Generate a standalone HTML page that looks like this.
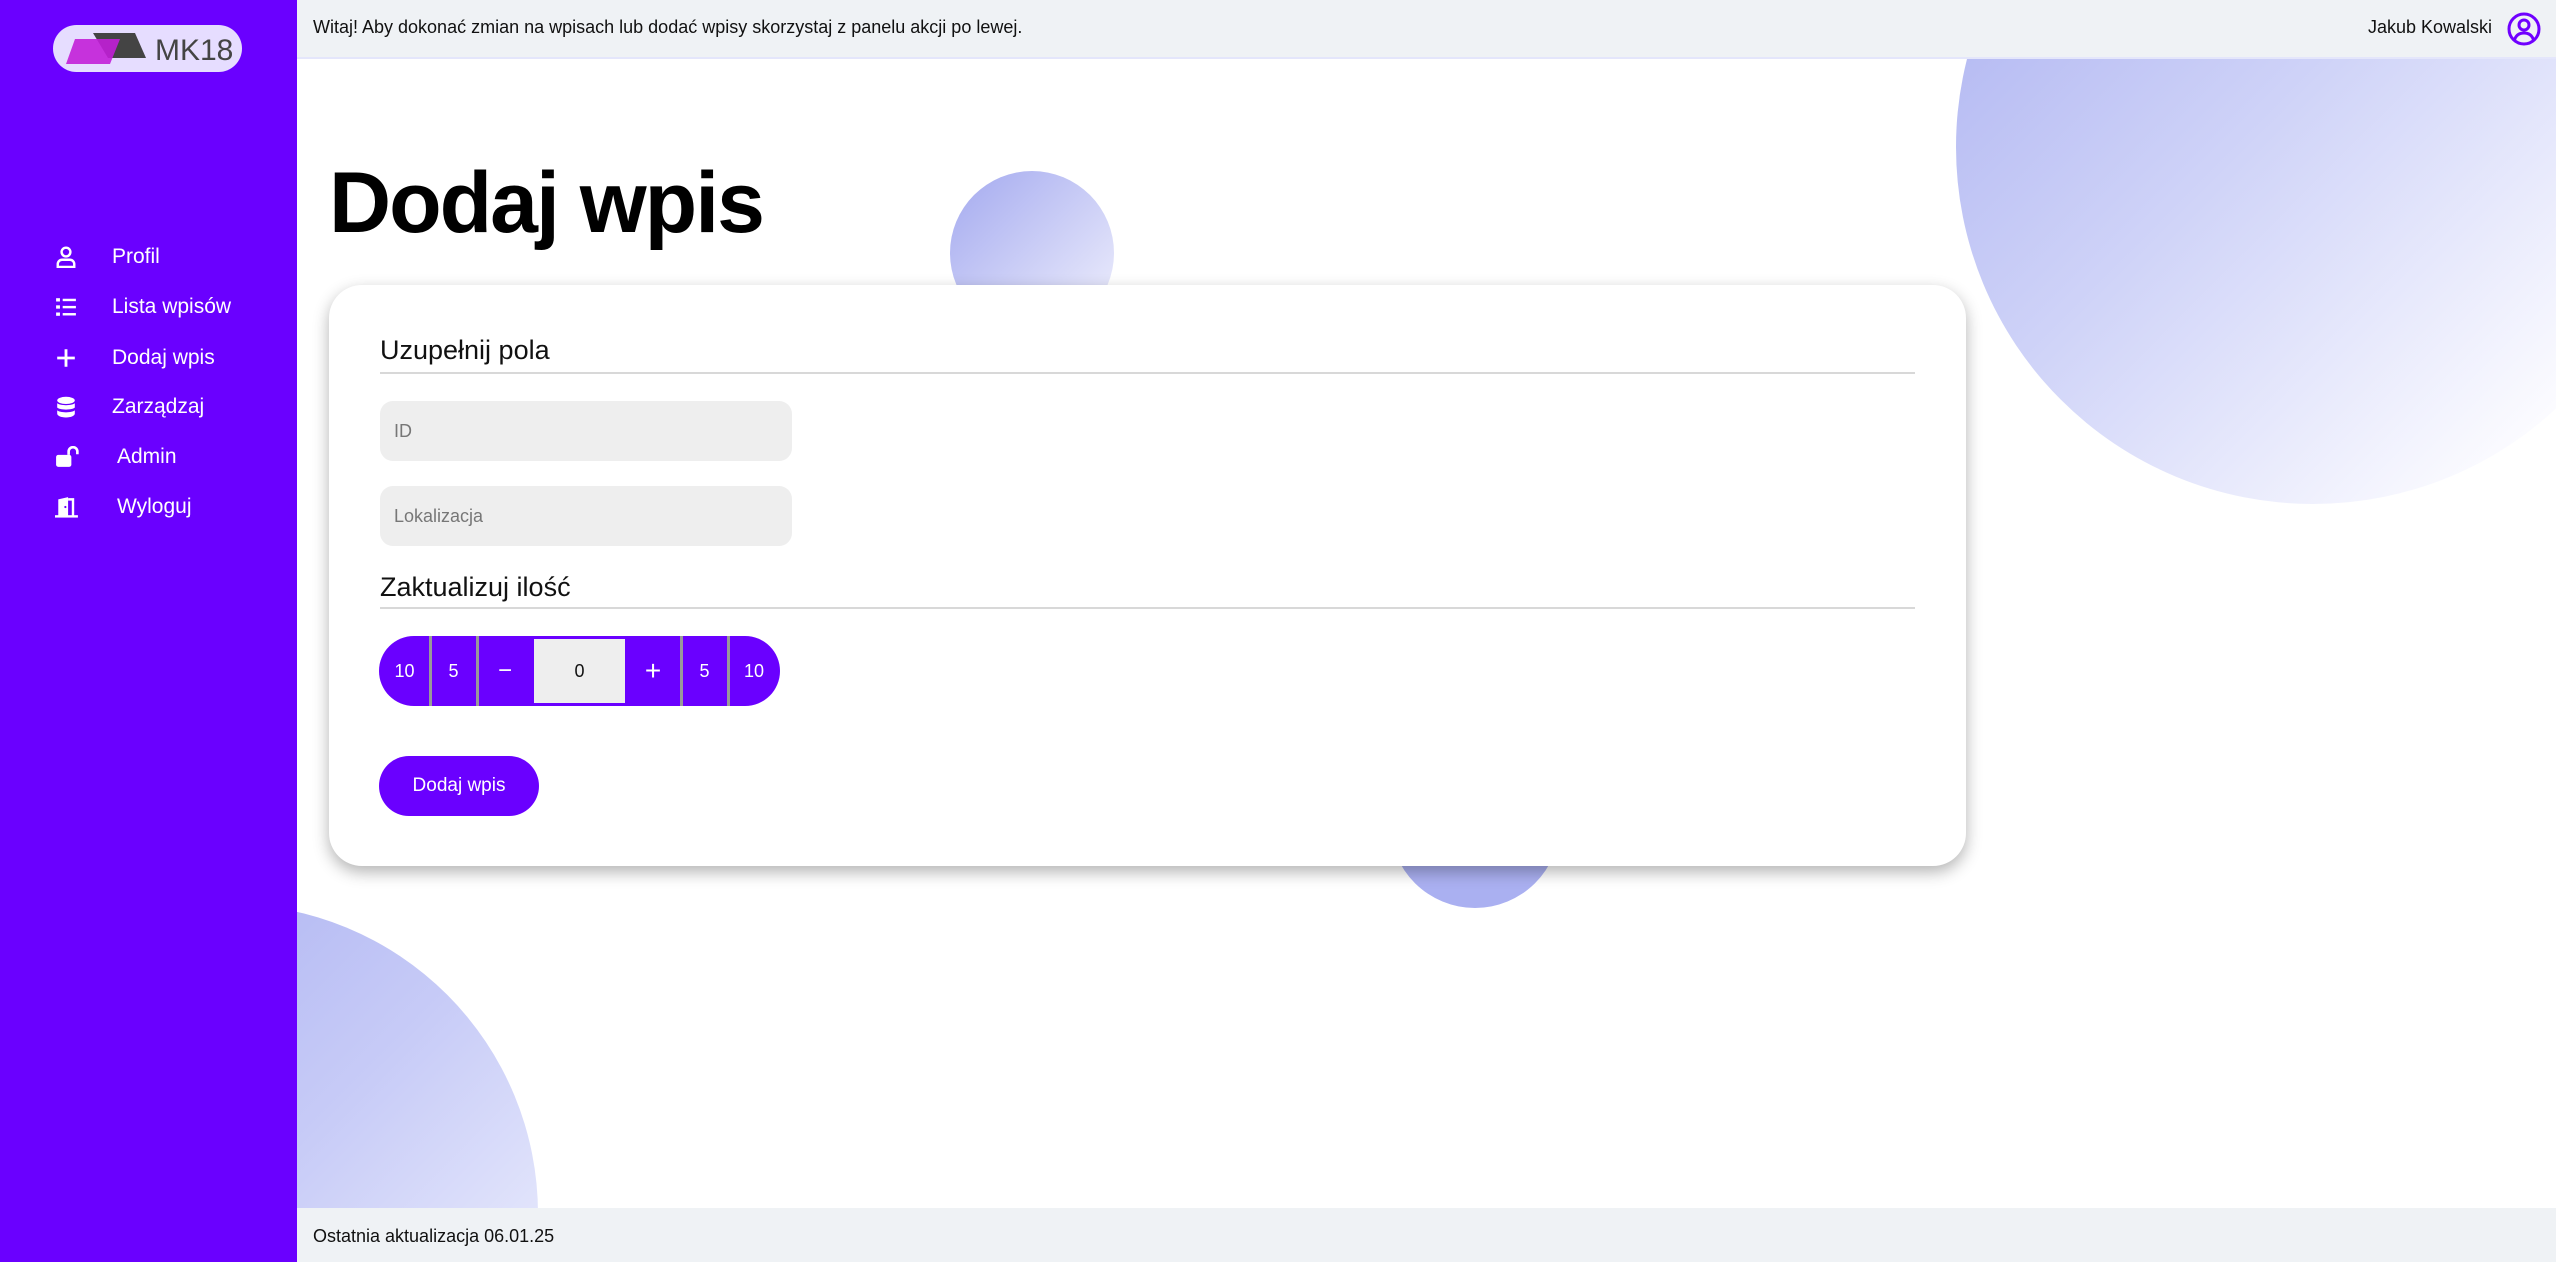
<!DOCTYPE html>
<html><head><meta charset="utf-8">
<style>
*{margin:0;padding:0;box-sizing:border-box}
html,body{width:2556px;height:1262px;overflow:hidden;background:#fff;font-family:"Liberation Sans",sans-serif}
#wrap{position:relative;width:2556px;height:1262px;overflow:hidden}
.abs{position:absolute}
#side{left:0;top:0;width:297px;height:1262px;background:#6a00ff;z-index:5}
#top{left:297px;top:0;width:2259px;height:59px;background:#eff2f5;z-index:4;border-bottom:2px solid #e4e6fb}
#foot{left:297px;top:1208px;width:2259px;height:54px;background:#eff2f5;z-index:4}
.circ{border-radius:50%}
.nav{position:absolute;left:0;width:297px;height:40px;color:#fff;font-size:21px;display:flex;align-items:center}
.nav svg{position:absolute;left:55px;top:9px}
.nav span{position:absolute;left:112px}
#card{left:329px;top:285px;width:1637px;height:581px;background:#fff;border-radius:33px;box-shadow:0 6px 16px rgba(0,0,0,.3);z-index:3}
.h2{position:absolute;left:51px;font-size:27px;color:#111}
.line{position:absolute;left:51px;width:1535px;height:2px;background:#d8d8d8}
.inp{position:absolute;left:51px;width:412px;height:60px;background:#eee;border-radius:13px;color:#777;font-size:18px;padding-left:14px;line-height:60px}
.seg{position:absolute;top:0;height:70px;color:#fff;font-size:18px;display:flex;align-items:center;justify-content:center}
.dv{position:absolute;top:0;width:3px;height:70px;background:#999}
</style></head><body><div id="wrap">
<div class="abs" style="left:1956px;top:0;width:600px;height:504px;overflow:hidden"><div class="abs circ" style="left:0;top:-210px;width:714px;height:714px;background:linear-gradient(135deg,#a6acef 0%,#cfd3f8 45%,#fbfbff 85%)"></div></div>
<div class="abs circ" style="left:950px;top:171px;width:164px;height:164px;background:linear-gradient(135deg,#a3a9ef,#f2f2fd)"></div>
<div class="abs circ" style="left:1390px;top:738px;width:170px;height:170px;background:#aab0f1"></div>
<div class="abs" style="left:0;top:904px;width:538px;height:358px;overflow:hidden"><div class="abs circ" style="left:-82px;top:0;width:620px;height:620px;background:linear-gradient(135deg,#a1a8ef 0%,#c7cbf7 50%,#eceefd 85%)"></div></div>

<div id="side" class="abs">
  <div class="abs" style="left:53px;top:25px;width:189px;height:47px;border-radius:24px;background:#e6ddff"></div>
  <svg class="abs" style="left:53px;top:25px" width="189" height="47">
    <polygon points="40,8 82,8 93,33 55,33" fill="#444"/>
    <polygon points="22,14 67,14 57,39 13,39" fill="#c21fd8" opacity=".9"/>
    <text x="102" y="35" font-family="Liberation Sans" font-size="30" fill="#444">MK18</text>
  </svg>
  <div class="nav" style="top:237px"><svg width="22" height="22" viewBox="0 0 20 20" fill="none" stroke="#fff" stroke-width="2.2"><circle cx="10" cy="5.5" r="4"/><path d="M2.5 19v-2.5a4 4 0 0 1 4-4h7a4 4 0 0 1 4 4V19z"/></svg><span>Profil</span></div>
  <div class="nav" style="top:287px"><svg width="22" height="22" viewBox="0 0 20 20" fill="#fff"><rect x="1" y="2" width="3.5" height="3"/><rect x="7" y="2.5" width="12" height="2.2"/><rect x="1" y="8.5" width="3.5" height="3"/><rect x="7" y="9" width="12" height="2.2"/><rect x="1" y="15" width="3.5" height="3"/><rect x="7" y="15.5" width="12" height="2.2"/></svg><span>Lista wpisów</span></div>
  <div class="nav" style="top:338px"><svg width="22" height="22" viewBox="0 0 20 20" stroke="#fff" stroke-width="2.6"><path d="M10 2v16M2 10h16"/></svg><span>Dodaj wpis</span></div>
  <div class="nav" style="top:387px"><svg width="22" height="22" viewBox="0 0 20 20" fill="#fff"><ellipse cx="10" cy="4" rx="8" ry="3.3"/><path d="M2 6.5c2 2.5 14 2.5 16 0v4c-2 2.5-14 2.5-16 0z"/><path d="M2 13c2 2.5 14 2.5 16 0v3c0 2-3.5 3.5-8 3.5S2 18 2 16z"/></svg><span>Zarządzaj</span></div>
  <div class="nav" style="top:437px"><svg width="24" height="22" viewBox="0 0 22 20" fill="#fff"><rect x="1" y="8" width="14" height="11" rx="2"/><path d="M12.5 8V5a4 4 0 0 1 8 0v2.5" fill="none" stroke="#fff" stroke-width="2.4"/></svg><span style="left:117px">Admin</span></div>
  <div class="nav" style="top:487px"><svg width="24" height="22" viewBox="0 0 22 20" fill="#fff"><path d="M3 18V3l9-2v17z"/><rect x="0" y="17.5" width="21" height="2.2"/><path d="M12 3h4.5v15" fill="none" stroke="#fff" stroke-width="2.2"/><circle cx="9.5" cy="10" r="1" fill="#6a00ff"/></svg><span style="left:117px">Wyloguj</span></div>
</div>

<div id="top" class="abs">
  <div class="abs" style="left:16px;top:17px;font-size:18px;color:#111">Witaj! Aby dokonać zmian na wpisach lub dodać wpisy skorzystaj z panelu akcji po lewej.</div>
  <div class="abs" style="right:64px;top:17px;font-size:18px;color:#111">Jakub Kowalski</div>
  <svg class="abs" style="left:2210px;top:12px" width="34" height="34" viewBox="0 0 34 34" fill="none" stroke="#7000ff" stroke-width="3"><circle cx="17" cy="17" r="15"/><circle cx="17" cy="13" r="5"/><path d="M7.5 28c1.5-5 5-7 9.5-7s8 2 9.5 7"/></svg>
</div>

<div class="abs" style="left:329px;top:154px;font-size:86px;font-weight:bold;color:#000;letter-spacing:-2px;z-index:2">Dodaj wpis</div>

<div id="card" class="abs">
  <div class="h2" style="top:50px">Uzupełnij pola</div>
  <div class="line" style="top:87px"></div>
  <div class="inp" style="top:116px">ID</div>
  <div class="inp" style="top:201px">Lokalizacja</div>
  <div class="h2" style="top:287px">Zaktualizuj ilość</div>
  <div class="line" style="top:322px"></div>
  <div class="abs" style="left:50px;top:351px;width:401px;height:70px;background:#6a00ff;border-radius:35px;overflow:hidden">
    <div class="seg" style="left:0;width:51px">10</div>
    <div class="dv" style="left:50px"></div>
    <div class="seg" style="left:51px;width:47px">5</div>
    <div class="dv" style="left:97px"></div>
    <div class="seg" style="left:98px;width:56px;font-size:24px">−</div>
    <div class="abs" style="left:155px;top:3px;width:91px;height:64px;background:#eee;color:#111;font-size:18px;display:flex;align-items:center;justify-content:center">0</div>
    <div class="seg" style="left:246px;width:56px;font-size:28px">+</div>
    <div class="dv" style="left:301px"></div>
    <div class="seg" style="left:302px;width:47px">5</div>
    <div class="dv" style="left:348px"></div>
    <div class="seg" style="left:349px;width:52px">10</div>
  </div>
  <div class="abs" style="left:50px;top:471px;width:160px;height:60px;background:#6a00ff;border-radius:30px;color:#fff;font-size:19px;display:flex;align-items:center;justify-content:center">Dodaj wpis</div>
</div>

<div id="foot" class="abs"><div class="abs" style="left:16px;top:18px;font-size:18px;color:#111">Ostatnia aktualizacja 06.01.25</div></div>
</div></body></html>
